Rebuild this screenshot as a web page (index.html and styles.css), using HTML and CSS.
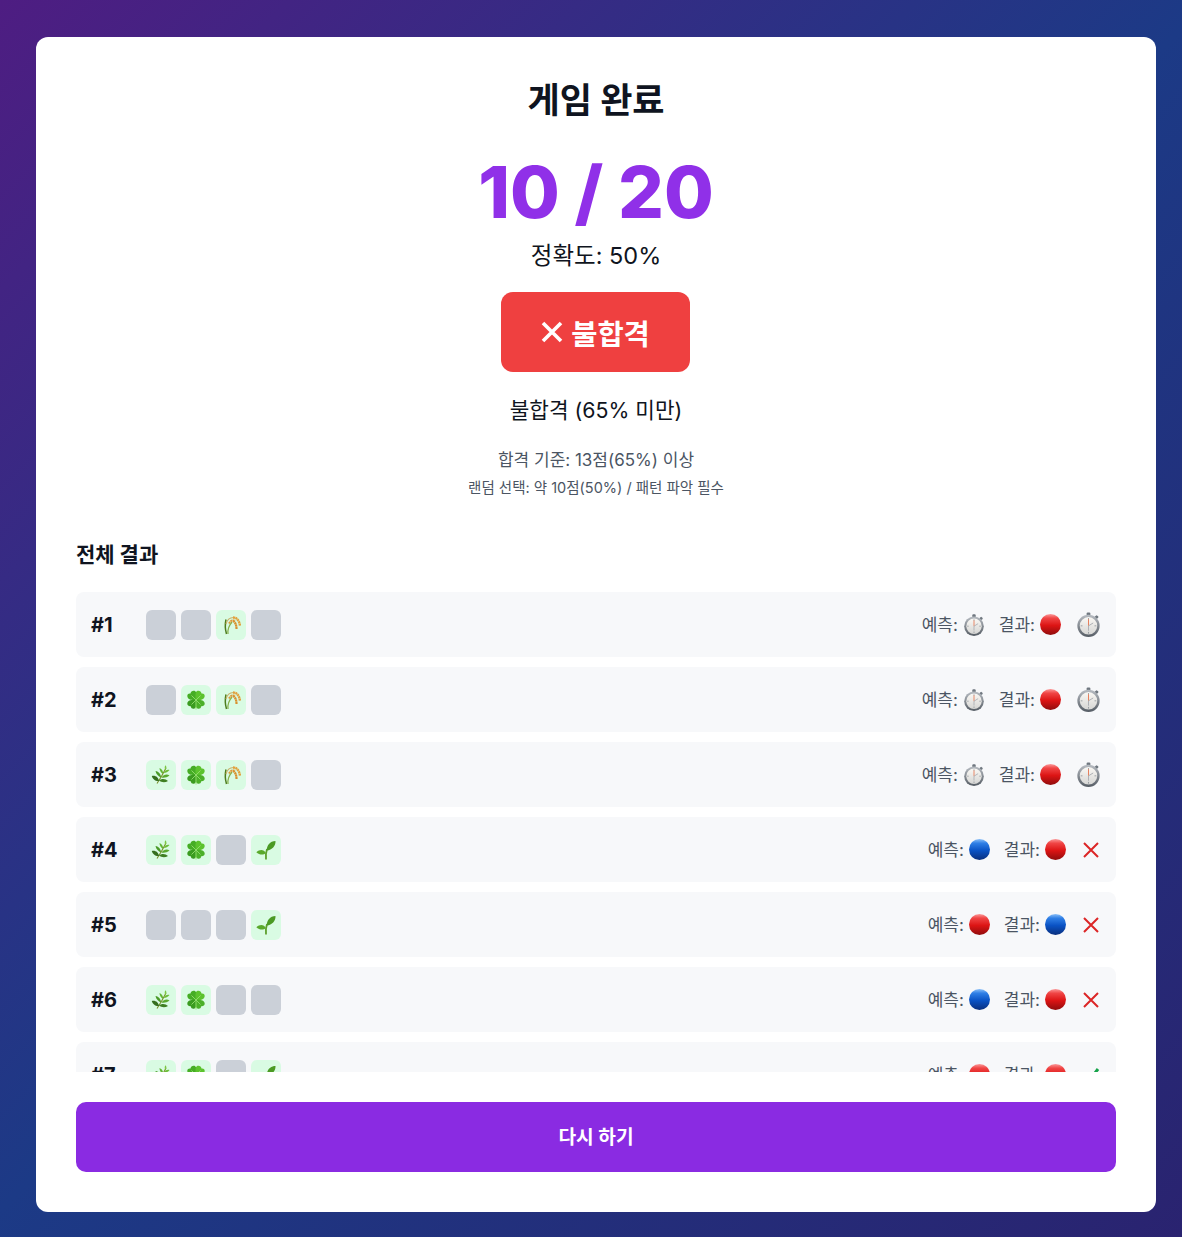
FILE: index.html
```html
<!DOCTYPE html>
<html lang="ko">
<head>
<meta charset="utf-8">
<title>게임 완료</title>
<link rel="stylesheet" href="styles.css">
</head>
<body>
<svg class="defs" width="0" height="0" aria-hidden="true">
  <defs>
    <linearGradient id="gr" x1="0" y1="0" x2="0" y2="1">
      <stop offset="0" stop-color="#fb9a9a"/><stop offset=".2" stop-color="#f04545"/><stop offset=".55" stop-color="#dc1414"/><stop offset="1" stop-color="#8f0d0d"/>
    </linearGradient>
    <linearGradient id="gb" x1="0" y1="0" x2="0" y2="1">
      <stop offset="0" stop-color="#8cc0f8"/><stop offset=".2" stop-color="#2f7fe6"/><stop offset=".55" stop-color="#0a52c4"/><stop offset="1" stop-color="#0a2f7d"/>
    </linearGradient>
    <linearGradient id="gw" x1="0" y1="0" x2="0" y2="1">
      <stop offset="0" stop-color="#b8bdc3"/><stop offset="1" stop-color="#555c64"/>
    </linearGradient>
    <linearGradient id="gf" x1="0" y1="0" x2="0" y2="1">
      <stop offset="0" stop-color="#faf8f4"/><stop offset="1" stop-color="#d6d6d4"/>
    </linearGradient>
    <symbol id="red" viewBox="0 0 22 22"><circle cx="11" cy="11" r="11" fill="url(#gr)"/></symbol>
    <symbol id="blue" viewBox="0 0 22 22"><circle cx="11" cy="11" r="11" fill="url(#gb)"/></symbol>
    <symbol id="watch" viewBox="0 0 24 24">
      <rect x="10.2" y="0.4" width="3.6" height="3.8" rx="1" fill="#6f777f"/>
      <rect x="18.300" y="3.400" width="3" height="3" rx="1" transform="rotate(45 19.800 4.900)" fill="#6f777f"/>
      <circle cx="12" cy="13.300" r="10.700" fill="url(#gw)"/>
      <circle cx="12" cy="13.300" r="8.400" fill="url(#gf)"/>
      <path d="M12 5.800V7.500M12 19.100V20.800M4.500 13.300H6.200M17.800 13.300H19.500" stroke="#8c9197" stroke-width=".8"/>
      <path d="M12 13.300V7" stroke="#e8805c" stroke-width="1"/>
      <path d="M12 13.300 16.500 10.500M12 13.300V18" stroke="#a9adb2" stroke-width=".9"/>
    </symbol>
    <symbol id="cross" viewBox="0 0 20 20"><path d="M3 3 17 17M17 3 3 17" stroke="#dc2626" stroke-width="2" fill="none"/></symbol>
    <symbol id="check" viewBox="0 0 20 20"><path d="M3 11 8 16 17 4" stroke="#16a34a" stroke-width="3" fill="none"/></symbol>
    <symbol id="herb" viewBox="0 0 20 20">
      <path d="M6 18.500C9 14 12 9 15 3" stroke="#7a8f2c" stroke-width="1.100" fill="none"/>
      <path d="M8 16C4.500 16.500 1.500 14 .8 11 4.500 10 7.500 12.500 8 16Z" fill="#356e1e"/>
      <path d="M8 15.500C10.500 17.500 14 17.800 17 16 14.500 13.500 10.500 13.300 8 15.500Z" fill="#3f7f22"/>
      <path d="M10 12.500C7.500 11.500 5 9 4.500 6 7.800 6.500 10 9.300 10 12.500Z" fill="#4a9a28"/>
      <path d="M10.500 12.500C13 13 16 12.500 18.500 10.500 16 8.800 12.500 9.500 10.500 12.500Z" fill="#5aa82e"/>
      <path d="M12 9C10 8 8.500 5.500 8.500 3 11 4 12.500 6.500 12 9Z" fill="#63b532"/>
      <path d="M12.800 8C14.800 8 17 7 18.500 5 16 4.300 13.800 5.500 12.800 8Z" fill="#6dbd38"/>
      <path d="M14.300 4.800C13.500 3.500 13.500 1.800 14.300 .3 15.800 1.500 15.800 3.400 14.300 4.800Z" fill="#7cc743"/>
    </symbol>
    <symbol id="clover" viewBox="0 0 20 20">
      <path d="M10 10C6.500 10.500 1.500 9.800 1.300 6 1.200 3.800 3 3.200 4.500 3.500 4.500 1.200 7 .2 8.500 .8 11 1.800 10.800 6.500 10 10Z" fill="#46ad25"/>
      <path d="M10 10C9.200 6.500 9 1.800 11.500 .8 13 .2 15.500 1.200 15.500 3.500 17 3.200 18.800 3.800 18.700 6 18.500 9.800 13.500 10.500 10 10Z" fill="#5cc32d"/>
      <path d="M10 10C6.500 9.500 1.500 10.200 1.300 13.500 1.200 15.800 3.300 16.500 4.800 16.200 4.800 18.300 7 19.200 8.500 18.500 10.800 17.500 10.500 13 10 10Z" fill="#3b9b20"/>
      <path d="M10 10C13.500 9.500 18.500 10.200 18.700 13.500 18.800 15.800 16.700 16.500 15.200 16.200 15.200 18.300 13 19.200 11.500 18.500 9.200 17.500 9.500 13 10 10Z" fill="#4bb028"/>
      <path d="M10 10V19.500M10 10 5.500 5.500M10 10 14.500 5.500M10 10 5.500 14.500M10 10 14.500 14.500" stroke="#93dc6e" stroke-width=".9" fill="none"/>
    </symbol>
    <symbol id="rice" viewBox="0 0 20 20">
      <path d="M5.500 19C4 14 4 9 5 4.500" stroke="#4d7d1e" stroke-width="1.500" fill="none"/>
      <path d="M7 19C6.500 15 7.500 11 11 7" stroke="#86b04a" stroke-width="1.200" fill="none"/>
      <path d="M5 9C6 5 9 2.500 12.500 2.500" stroke="#c9b06a" stroke-width="1.100" fill="none"/>
      <path d="M8 8.500C9.500 5.500 12 4.800 14 6" stroke="#dd9a3a" stroke-width="2" stroke-dasharray="2 .4" fill="none"/>
      <path d="M12 2.500C16 2.500 18.500 6 19 11" stroke="#e2a03c" stroke-width="2.400" stroke-dasharray="2 .4" fill="none"/>
      <path d="M12 6C14.500 7 15.500 10.500 15.500 14" stroke="#d8902f" stroke-width="2.200" stroke-dasharray="2 .4" fill="none"/>
    </symbol>
    <symbol id="seed" viewBox="0 0 20 20">
      <path d="M10 19.500C9.500 15 10 12 11 9" stroke="#5d9f2d" stroke-width="1.800" fill="none"/>
      <path d="M10.800 10.500C10.500 5.500 14 1 19.500 1 19.800 6 16 10 10.800 10.500Z" fill="#4b9a24"/>
      <path d="M9.800 13C8 9.300 3.800 9 .3 12.200 3.300 15 7.500 15.300 9.800 13Z" fill="#5aa92c"/>
    </symbol>
  </defs>
</svg>
<main class="card">
  <section class="summary">
    <h1 class="title">게임 완료</h1>
    <div class="score">10 / 20</div>
    <p class="accuracy">정확도: 50%</p>
    <div class="badge"><svg class="badge-x" viewBox="0 0 22 22"><path d="M2 2 20 20M20 2 2 20"/></svg><span>불합격</span></div>
    <p class="verdict">불합격 (65% 미만)</p>
    <p class="criteria">합격 기준: 13점(65%) 이상</p>
    <p class="note">랜덤 선택: 약 10점(50%) / 패턴 파악 필수</p>
  </section>
  <h2 class="list-title">전체 결과</h2>
  <div class="list">
    <div class="row"><span class="num">#1</span>
      <div class="tiles"><span class="tile off"></span><span class="tile off"></span><span class="tile on"><svg class="plant"><use href="#rice"/></svg></span><span class="tile off"></span></div>
      <div class="info"><span class="pair">예측: <svg class="ic-watch"><use href="#watch"/></svg></span><span class="pair">결과: <svg class="ball"><use href="#red"/></svg></span><svg class="res-watch"><use href="#watch"/></svg></div></div>
    <div class="row"><span class="num">#2</span>
      <div class="tiles"><span class="tile off"></span><span class="tile on"><svg class="plant"><use href="#clover"/></svg></span><span class="tile on"><svg class="plant"><use href="#rice"/></svg></span><span class="tile off"></span></div>
      <div class="info"><span class="pair">예측: <svg class="ic-watch"><use href="#watch"/></svg></span><span class="pair">결과: <svg class="ball"><use href="#red"/></svg></span><svg class="res-watch"><use href="#watch"/></svg></div></div>
    <div class="row"><span class="num">#3</span>
      <div class="tiles"><span class="tile on"><svg class="plant"><use href="#herb"/></svg></span><span class="tile on"><svg class="plant"><use href="#clover"/></svg></span><span class="tile on"><svg class="plant"><use href="#rice"/></svg></span><span class="tile off"></span></div>
      <div class="info"><span class="pair">예측: <svg class="ic-watch"><use href="#watch"/></svg></span><span class="pair">결과: <svg class="ball"><use href="#red"/></svg></span><svg class="res-watch"><use href="#watch"/></svg></div></div>
    <div class="row"><span class="num">#4</span>
      <div class="tiles"><span class="tile on"><svg class="plant"><use href="#herb"/></svg></span><span class="tile on"><svg class="plant"><use href="#clover"/></svg></span><span class="tile off"></span><span class="tile on"><svg class="plant"><use href="#seed"/></svg></span></div>
      <div class="info"><span class="pair">예측: <svg class="ball"><use href="#blue"/></svg></span><span class="pair">결과: <svg class="ball"><use href="#red"/></svg></span><svg class="res-mark"><use href="#cross"/></svg></div></div>
    <div class="row"><span class="num">#5</span>
      <div class="tiles"><span class="tile off"></span><span class="tile off"></span><span class="tile off"></span><span class="tile on"><svg class="plant"><use href="#seed"/></svg></span></div>
      <div class="info"><span class="pair">예측: <svg class="ball"><use href="#red"/></svg></span><span class="pair">결과: <svg class="ball"><use href="#blue"/></svg></span><svg class="res-mark"><use href="#cross"/></svg></div></div>
    <div class="row"><span class="num">#6</span>
      <div class="tiles"><span class="tile on"><svg class="plant"><use href="#herb"/></svg></span><span class="tile on"><svg class="plant"><use href="#clover"/></svg></span><span class="tile off"></span><span class="tile off"></span></div>
      <div class="info"><span class="pair">예측: <svg class="ball"><use href="#blue"/></svg></span><span class="pair">결과: <svg class="ball"><use href="#red"/></svg></span><svg class="res-mark"><use href="#cross"/></svg></div></div>
    <div class="row"><span class="num">#7</span>
      <div class="tiles"><span class="tile on"><svg class="plant"><use href="#herb"/></svg></span><span class="tile on"><svg class="plant"><use href="#clover"/></svg></span><span class="tile off"></span><span class="tile on"><svg class="plant"><use href="#seed"/></svg></span></div>
      <div class="info"><span class="pair">예측: <svg class="ball"><use href="#red"/></svg></span><span class="pair">결과: <svg class="ball"><use href="#red"/></svg></span><svg class="res-mark"><use href="#check"/></svg></div></div>
  </div>
  <button class="retry" type="button">다시 하기</button>
</main>
</body>
</html>
```
FILE: styles.css
```css
* { box-sizing: border-box; }
html, body { margin: 0; height: 100%; }
body {
  font-family: Inter, "Noto Sans CJK KR", sans-serif;
  background: linear-gradient(135deg, #4e1d82 0%, #1c3a86 50%, #2a2370 100%);
  color: #0f1420;
  padding: 37px 26px 25px 36px;
  overflow: hidden;
}
.defs { position: absolute; }
.card {
  background: #fff;
  border-radius: 12px;
  height: 1175px;
  padding: 40px;
}
.summary { display: flex; flex-direction: column; align-items: center; text-align: center; }
.title { margin: 3px 0 0; font-size: 35px; line-height: 40px; font-weight: 700; }
.score { margin-top: 36px; font-size: 72px; line-height: 72px; font-weight: 800; color: #9030e8; word-spacing: -1px; }
.accuracy { margin: 12px 0 0; font-size: 23.5px; line-height: 32px; }
.badge {
  margin: 20px 1px 0 0; height: 80px; width: 189px;
  display: flex; align-items: center; justify-content: center; gap: 8px;
  background: #ef4040; color: #fff; border-radius: 12px;
  font-size: 28.5px; font-weight: 700;
}
.badge-x { width: 22px; height: 22px; fill: none; stroke: #fff; stroke-width: 3.6; }
.verdict { margin: 22px 0 0; font-size: 21.3px; line-height: 32px; }
.criteria { margin: 22px 0 0; font-size: 17px; line-height: 24px; color: #4b5563; }
.note { margin: 6px 0 0; font-size: 14.5px; line-height: 20px; color: #4b5563; }
.list-title { margin: 43px 0 0; font-size: 21px; line-height: 28px; font-weight: 700; }
.list { margin-top: 23px; height: 480px; overflow: hidden; display: flex; flex-direction: column; gap: 10px; }
.row {
  flex: none; height: 65px; padding: 0 15px;
  display: flex; align-items: center;
  background: #f7f8fa; border-radius: 8px;
}
.num { width: 55px; padding-top: 1px; font-size: 20px; font-weight: 700; }
.tiles { display: flex; gap: 5px; }
.tile { width: 30px; height: 30px; border-radius: 6px; display: flex; align-items: center; justify-content: center; }
.tile.off { background: #cbd0d8; }
.tile.on { background: #d9fbe3; }
.plant { width: 20px; height: 20px; }
.info { margin-left: auto; display: flex; align-items: center; gap: 14px; font-size: 17px; color: #4b5563; }
.pair { display: flex; align-items: center; gap: 5px; line-height: 22px; }
.ball { width: 21px; height: 21px; }
.ic-watch { width: 22px; height: 22px; }
.res-watch { width: 25px; height: 25px; margin-left: 1px; }
.res-mark { width: 20px; height: 20px; margin-left: 1px; }
.retry {
  display: block; width: 100%; height: 70px; margin-top: 30px; padding: 0 0 3px;
  border: 0; border-radius: 10px; background: #8a2be2; color: #fff;
  font: 700 19.2px Inter, "Noto Sans CJK KR", sans-serif;
}
```
